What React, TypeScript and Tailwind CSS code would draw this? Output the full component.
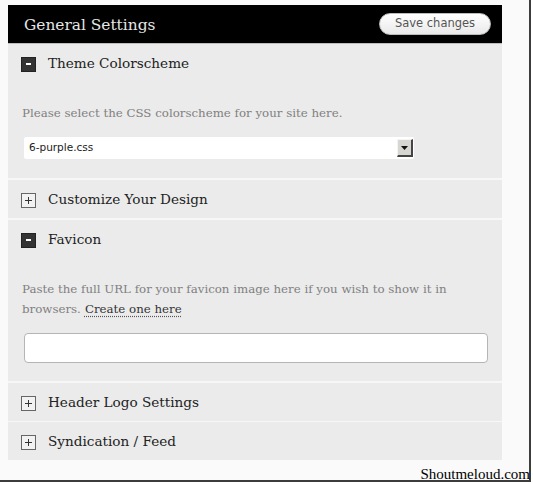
import React from "react";

const serif = "font-['DejaVu_Serif',serif]";

function MinusBox() {
  return (
    <span className="flex h-[15px] w-[15px] shrink-0 items-center justify-center bg-[#333] border border-[#222]">
      <span className="block h-[2px] w-[5px] bg-white" />
    </span>
  );
}

function PlusBox() {
  return (
    <span className="relative flex h-[15px] w-[15px] shrink-0 items-center justify-center border border-[#666] bg-[#f2f2f2]">
      <span className="absolute h-[1px] w-[7px] bg-[#333]" />
      <span className="absolute h-[7px] w-[1px] bg-[#333]" />
    </span>
  );
}

function Heading({ title, open }: { title: string; open?: boolean }) {
  return (
    <div className="flex h-[38px] items-center gap-[12px] pl-[13px] pt-[2px]">
      {open ? <MinusBox /> : <PlusBox />}
      <span className={`${serif} text-[13.6px] text-[#222] pb-[1px]`}>{title}</span>
    </div>
  );
}

export default function App() {
  return (
    <div className="h-[484px] w-[533px] bg-white">
      <div className="relative h-[482px] w-[531px] border-r-[2px] border-b-[2px] border-[#3c3c3c] bg-[#fafafa] pt-[5px] pl-[8px]">
        <div className="w-[494px]">
          {/* header bar */}
          <div className="flex h-[38px] items-center justify-between bg-black pl-[16px] pr-[11px]">
            <span className={`${serif} pt-[3px] text-[15.4px] text-[#e6e6e6]`}>General Settings</span>
            <button className="h-[22px] w-[112px] rounded-full border border-[#bbb] bg-gradient-to-b from-white to-[#e9e9e9] font-['DejaVu_Sans',sans-serif] text-[11.5px] text-[#555]">
              Save changes
            </button>
          </div>

          <div className="border-t border-[#bdbdbd]" />

          {/* theme colorscheme */}
          <div className="bg-[#ebebeb] pb-[19px]">
            <Heading title="Theme Colorscheme" open />
            <p className={`${serif} mt-[21px] pl-[14px] text-[11.8px] leading-[20px] text-[#808080]`}>
              Please select the CSS colorscheme for your site here.
            </p>
            <div className="mt-[14px] ml-[16px] flex h-[22px] w-[390px] items-center justify-between rounded-[2px] bg-white pl-[5px] pr-[1px]">
              <span className="font-['DejaVu_Sans',sans-serif] text-[10.5px] text-[#222]">6-purple.css</span>
              <span className="flex h-[18px] w-[16px] items-center justify-center border-t border-l border-[#f4f4f4] border-r-2 border-b-2 border-r-[#444] border-b-[#444] bg-[#d8d6d0]">
                <svg width="7" height="4" viewBox="0 0 7 4">
                  <path d="M0 0H7L3.5 4Z" fill="#111" />
                </svg>
              </span>
            </div>
          </div>

          <div className="border-t-2 border-[#f7f7f7] bg-[#ebebeb]">
            <Heading title="Customize Your Design" />
          </div>

          {/* favicon */}
          <div className="border-t-2 border-[#f7f7f7] bg-[#ebebeb] pb-[18px]">
            <Heading title="Favicon" open />
            <div className={`${serif} mt-[21px] pl-[14px] text-[11.8px] leading-[20px] text-[#808080]`}>
              <p>Paste the full URL for your favicon image here if you wish to show it in</p>
              <p className="flex gap-[4px]">
                <span>browsers.</span>
                <a className="text-[#333] underline decoration-dotted decoration-[#555] underline-offset-[3px]">Create one here</a>
              </p>
            </div>
            <input
              type="text"
              className="mt-[14px] ml-[16px] block h-[30px] w-[464px] rounded-[4px] border border-[#b5b5b5] bg-white"
            />
          </div>

          <div className="border-t-2 border-[#f7f7f7] bg-[#ebebeb]">
            <Heading title="Header Logo Settings" />
          </div>
          <div className="border-t border-[#f7f7f7] bg-[#ebebeb]">
            <Heading title="Syndication / Feed" />
          </div>
        </div>

        <span className="absolute right-[-1px] bottom-[-3px] font-['Liberation_Serif',serif] text-[15px] leading-[18px] text-black">
          Shoutmeloud.com
        </span>
      </div>
    </div>
  );
}
